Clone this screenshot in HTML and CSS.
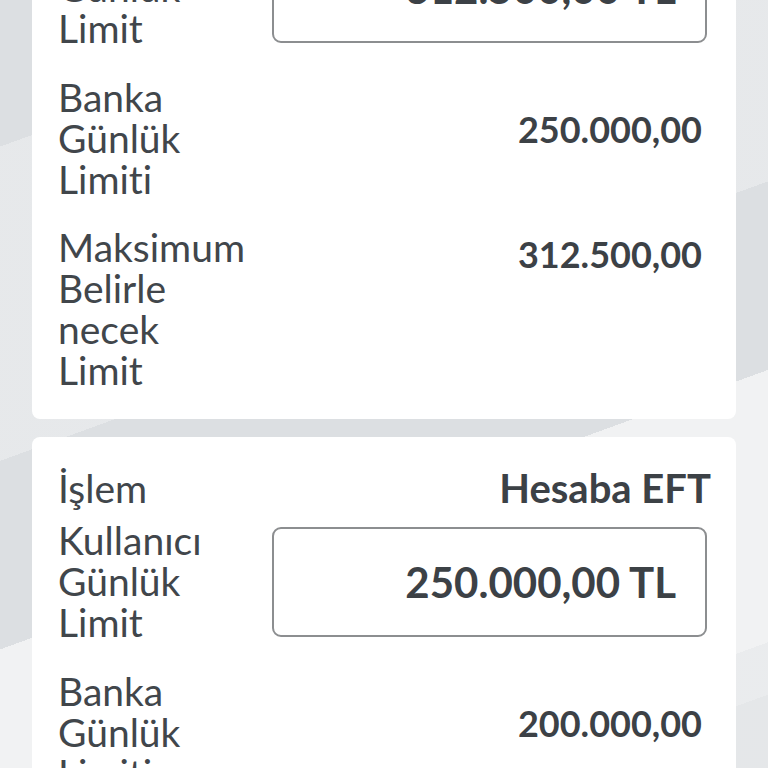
FILE: index.html
```html
<!DOCTYPE html>
<html lang="tr">
<head>
    <meta charset="UTF-8">
    <meta name="viewport" content="width=device-width, initial-scale=1.0">
    <title>Limit Bilgileri</title>
    <link rel="stylesheet" href="styles.css">
</head>
<body>
    <main class="page">

        <!-- Havale limit card (scrolled partly out of view) -->
        <section class="card">
            <div class="row row-head">
                <span class="label">İşlem</span>
                <span class="value value-head">Hesaba Havale</span>
            </div>
            <div class="row row-input">
                <span class="label">Kullanıcı Günlük Limit</span>
                <div class="amount-box">312.500,00 TL</div>
            </div>
            <div class="row row-bank">
                <span class="label">Banka Günlük Limiti</span>
                <span class="value">250.000,00</span>
            </div>
            <div class="row row-max">
                <span class="label">Maksimum Belirle<wbr>necek Limit</span>
                <span class="value">312.500,00</span>
            </div>
        </section>

        <!-- EFT limit card -->
        <section class="card">
            <div class="row row-head">
                <span class="label">İşlem</span>
                <span class="value value-head">Hesaba EFT</span>
            </div>
            <div class="row row-input">
                <span class="label">Kullanıcı Günlük Limit</span>
                <div class="amount-box">250.000,00 TL</div>
            </div>
            <div class="row row-bank">
                <span class="label">Banka Günlük Limiti</span>
                <span class="value">200.000,00</span>
            </div>
            <div class="row row-max">
                <span class="label">Maksimum Belirle<wbr>necek Limit</span>
                <span class="value">250.000,00</span>
            </div>
        </section>

    </main>
</body>
</html>
```

FILE: styles.css
```css
html, body {
    height: 100%;
}

body {
    margin: 0;
    padding: 0;
    overflow: hidden;
    font-family: Lato, "Open Sans", sans-serif;
    font-variant-ligatures: none;
    color: #41464b;
    background-color: #dcdfe2;
    background-image:
        linear-gradient(160deg, transparent 0 14%, rgba(255, 255, 255, 0.3) 14% 44%, transparent 44%),
        linear-gradient(160deg, transparent 0 62%, rgba(255, 255, 255, 0.6) 62% 88%, rgba(255, 255, 255, 0.4) 88% 93%, rgba(255, 255, 255, 0.25) 93%);
}

.page {
    margin-top: -157px; /* list is scrolled */
    padding: 0 32px;
}

.card {
    background-color: #ffffff;
    border-radius: 8px;
    padding: 30px 25px 28px 26px;
    margin-bottom: 18px;
}

.row {
    display: flex;
    justify-content: space-between;
    align-items: flex-start;
}

.label {
    width: 190px;
    font-size: 39px;
    line-height: 41px;
    font-weight: 400;
    color: #41464b;
}

.value {
    font-size: 36px;
    line-height: 43px;
    font-weight: 700;
    color: #3c4146;
    margin-right: 9px;
}

.row-head {
    align-items: baseline;
}

.value-head {
    font-size: 40px;
    margin-right: 0;
}

.row-input {
    align-items: center;
    margin-top: 10px;
}

.amount-box {
    box-sizing: border-box;
    width: 435px;
    height: 110px;
    margin-right: 4px;
    padding: 0 29px 0 20px;
    display: flex;
    align-items: center;
    justify-content: flex-end;
    border: 2px solid #8c8e90;
    border-radius: 9px;
    font-size: 42px;
    font-weight: 700;
    color: #3c4146;
}

.row-bank {
    margin-top: 28px;
}

.row-bank .value {
    margin-top: 31px;
}

.row-max {
    margin-top: 27px;
}

.row-max .value {
    margin-top: 6px;
}
```
